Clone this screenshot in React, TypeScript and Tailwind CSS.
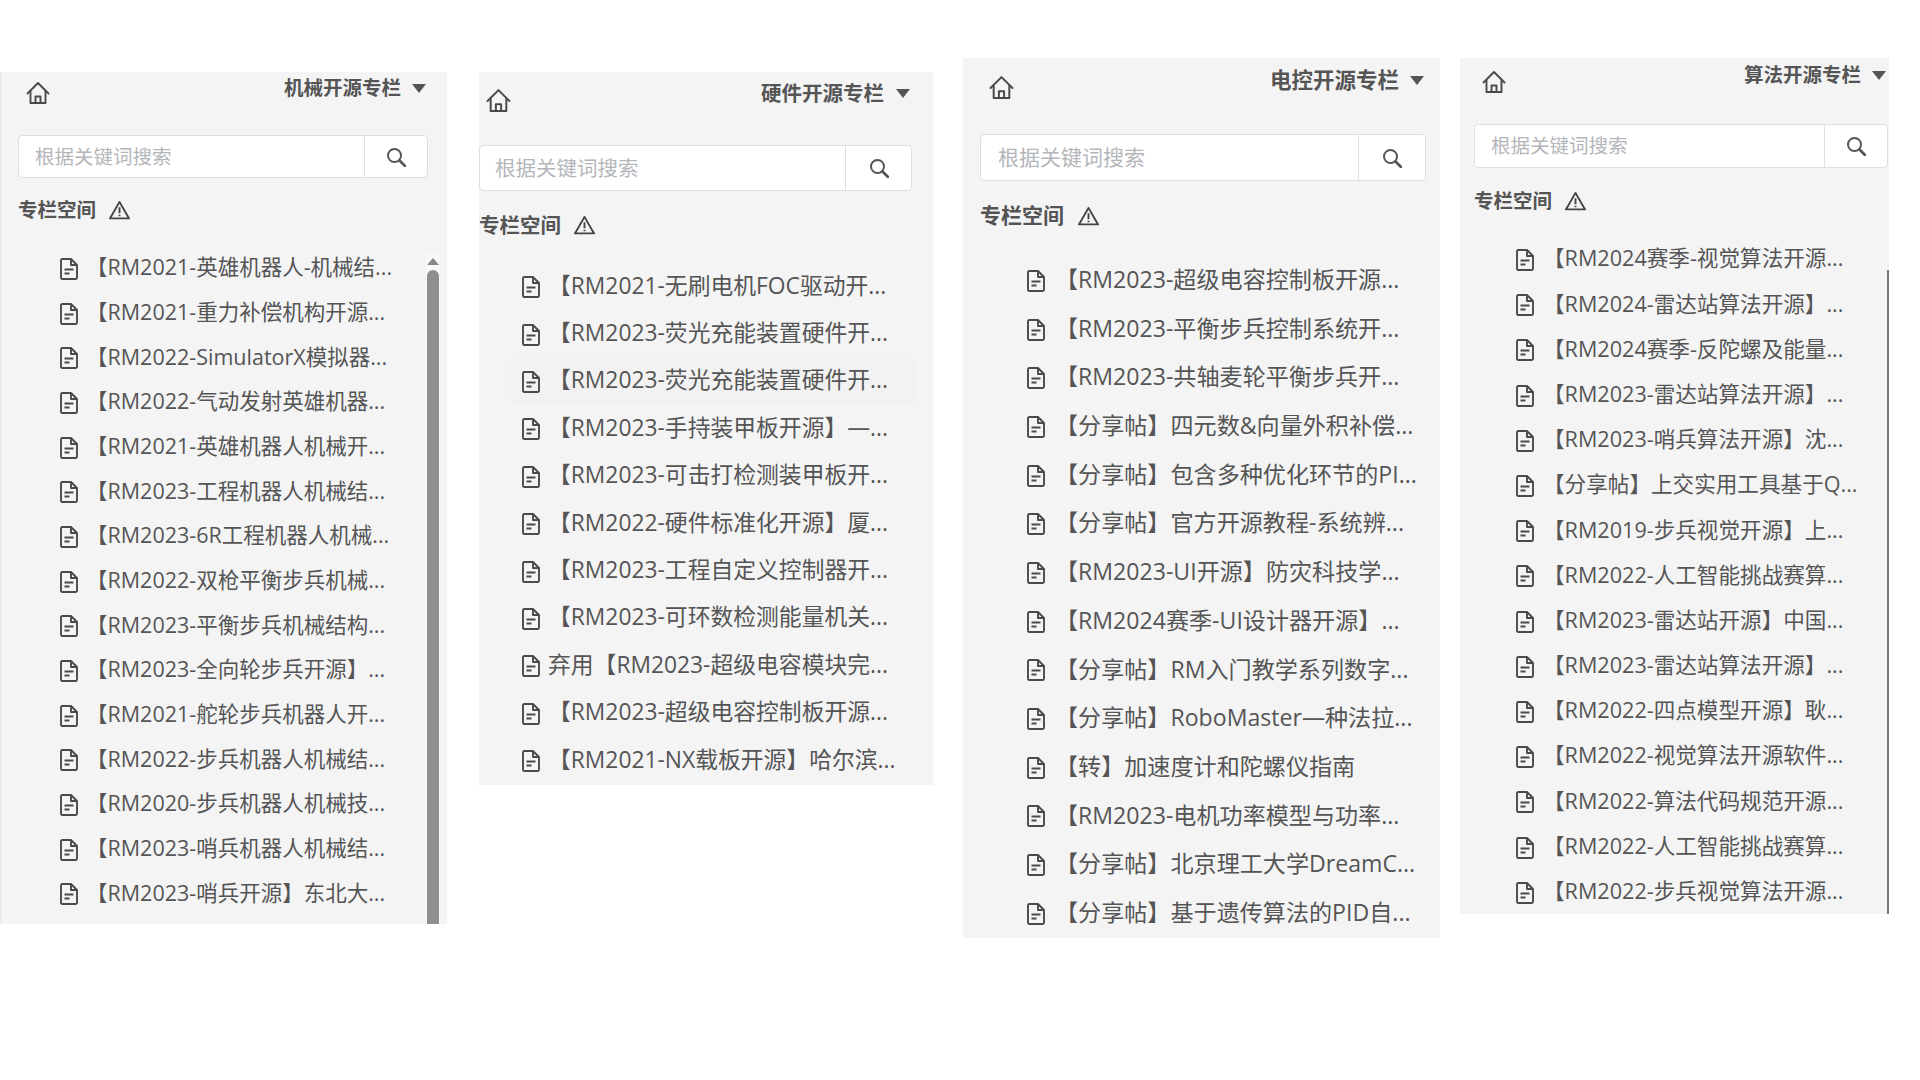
const columns = [
    {
        title: '机械开源专栏',
        panel: 'ml-0 mt-[72px] w-[447px] h-[852px] border-l border-gray-200',
        head: 'pl-[25px] pr-[21px] pt-[2px] h-[63px]',
        titleText: 'text-[19.5px] gap-[11px]',
        home: 'w-[24px] h-[24px] mt-[7px]',
        searchBox: 'ml-[17px] w-[410px] h-[43px]',
        input: 'w-[346px] pl-[16px] text-[19.5px]',
        label: 'ml-[17px] mt-[20px] h-[23px] text-[19.5px] gap-[13px]',
        list: 'mt-[24px] pl-[59px]',
        row: 'h-[44.7px] text-[21.5px] gap-[8px]',
        items: [
            '【RM2021-英雄机器人-机械结...',
            '【RM2021-重力补偿机构开源...',
            '【RM2022-SimulatorX模拟器...',
            '【RM2022-气动发射英雄机器...',
            '【RM2021-英雄机器人机械开...',
            '【RM2023-工程机器人机械结...',
            '【RM2023-6R工程机器人机械...',
            '【RM2022-双枪平衡步兵机械...',
            '【RM2023-平衡步兵机械结构...',
            '【RM2023-全向轮步兵开源】...',
            '【RM2021-舵轮步兵机器人开...',
            '【RM2022-步兵机器人机械结...',
            '【RM2020-步兵机器人机械技...',
            '【RM2023-哨兵机器人机械结...',
            '【RM2023-哨兵开源】东北大...',
        ],
    },
    {
        title: '硬件开源专栏',
        panel: 'ml-[32px] mt-[72px] w-[454px] h-[713px]',
        head: 'pl-[7px] pr-[23px] pt-[7px] h-[73px]',
        titleText: 'text-[20.5px] gap-[12px]',
        home: 'w-[25px] h-[25px] mt-[9px]',
        searchBox: 'ml-0 w-[433px] h-[46px]',
        input: 'w-[366px] pl-[15px] text-[20.5px]',
        label: 'ml-0 mt-[22px] h-[24px] text-[20.5px] gap-[13px]',
        list: 'mt-[25px] pl-[43px]',
        row: 'h-[47.4px] text-[22.8px] gap-[8px]',
        hover: 2,
        items: [
            '【RM2021-无刷电机FOC驱动开...',
            '【RM2023-荧光充能装置硬件开...',
            '【RM2023-荧光充能装置硬件开...',
            '【RM2023-手持装甲板开源】—...',
            '【RM2023-可击打检测装甲板开...',
            '【RM2022-硬件标准化开源】厦...',
            '【RM2023-工程自定义控制器开...',
            '【RM2023-可环数检测能量机关...',
            '弃用【RM2023-超级电容模块完...',
            '【RM2023-超级电容控制板开源...',
            '【RM2021-NX载板开源】哈尔滨...',
        ],
    },
    {
        title: '电控开源专栏',
        panel: 'ml-[30px] mt-[58px] w-[477px] h-[880px]',
        head: 'pl-[26px] pr-[16px] pt-[8px] h-[76px]',
        titleText: 'text-[21.5px] gap-[11px]',
        home: 'w-[25px] h-[25px] mt-[9px]',
        searchBox: 'ml-[17px] w-[446px] h-[47px]',
        input: 'w-[378px] pl-[17px] text-[21px]',
        label: 'ml-[17px] mt-[23px] h-[24px] text-[21px] gap-[14px]',
        list: 'mt-[27px] pl-[64px]',
        row: 'h-[48.7px] text-[23.1px] gap-[10px]',
        items: [
            '【RM2023-超级电容控制板开源...',
            '【RM2023-平衡步兵控制系统开...',
            '【RM2023-共轴麦轮平衡步兵开...',
            '【分享帖】四元数&向量外积补偿...',
            '【分享帖】包含多种优化环节的PI...',
            '【分享帖】官方开源教程-系统辨...',
            '【RM2023-UI开源】防灾科技学...',
            '【RM2024赛季-UI设计器开源】...',
            '【分享帖】RM入门教学系列数字...',
            '【分享帖】RoboMaster—种法拉...',
            '【转】加速度计和陀螺仪指南',
            '【RM2023-电机功率模型与功率...',
            '【分享帖】北京理工大学DreamC...',
            '【分享帖】基于遗传算法的PID自...',
        ],
    },
    {
        title: '算法开源专栏',
        panel: 'ml-[20px] mt-[58px] w-[429px] h-[856px]',
        head: 'pl-[22px] pr-[3px] pt-[3px] h-[66px]',
        titleText: 'text-[19.5px] gap-[11px]',
        home: 'w-[24px] h-[24px] mt-[9px]',
        searchBox: 'ml-[14px] w-[414px] h-[44px]',
        input: 'w-[350px] pl-[16px] text-[19.5px]',
        label: 'ml-[14px] mt-[21px] h-[23px] text-[19.5px] gap-[13px]',
        list: 'mt-[24px] pl-[56px]',
        row: 'h-[45.2px] text-[21.6px] gap-[9px]',
        thinBar: true,
        items: [
            '【RM2024赛季-视觉算法开源...',
            '【RM2024-雷达站算法开源】...',
            '【RM2024赛季-反陀螺及能量...',
            '【RM2023-雷达站算法开源】...',
            '【RM2023-哨兵算法开源】沈...',
            '【分享帖】上交实用工具基于Q...',
            '【RM2019-步兵视觉开源】上...',
            '【RM2022-人工智能挑战赛算...',
            '【RM2023-雷达站开源】中国...',
            '【RM2023-雷达站算法开源】...',
            '【RM2022-四点模型开源】耿...',
            '【RM2022-视觉算法开源软件...',
            '【RM2022-算法代码规范开源...',
            '【RM2022-人工智能挑战赛算...',
            '【RM2022-步兵视觉算法开源...',
        ],
    },
];

function HomeIcon({ className }: { className: string }) {
    return (
        <svg viewBox="0 0 24 24" fill="none" stroke="#4a4a4a" strokeWidth="1.9" strokeLinejoin="round" strokeLinecap="round" className={className}>
            <path d="M1.5 12.5 12 2l10.5 10.5" />
            <path d="M4.5 10.5V22h15V10.5" />
            <path d="M9.5 22v-6.5h5V22" />
        </svg>
    );
}

function DocIcon() {
    return (
        <svg viewBox="0 0 18 22" fill="none" stroke="#4a4a4a" strokeWidth="1.9" strokeLinejoin="round" className="w-[18px] h-[22px] shrink-0 mt-[3px]">
            <path d="M1 2.2C1 1.5 1.5 1 2.2 1H11l6 6v12.8c0 .7-.5 1.2-1.2 1.2H2.2c-.7 0-1.2-.5-1.2-1.2z" />
            <path d="M11 1v6h6" />
            <path d="M4.5 11.5h9M4.5 15.5h5" />
        </svg>
    );
}

function WarningIcon() {
    return (
        <svg viewBox="0 0 22 20" fill="none" stroke="#444" strokeWidth="2" strokeLinejoin="round" className="w-[21px] h-[20px] shrink-0">
            <path d="M11 1.5 21 18.8H1z" />
            <path d="M11 7v6.5M11 15v1.5" />
        </svg>
    );
}

function SearchIcon() {
    return (
        <svg viewBox="0 0 20 20" fill="none" stroke="#555" className="w-[20px] h-[20px]">
            <circle cx="8.5" cy="8.5" r="6.5" strokeWidth="2" />
            <path d="M13.5 13.5 19 19" strokeWidth="2.8" strokeLinecap="round" />
        </svg>
    );
}

export default function App() {
    return (
        <div className="w-[1920px] h-[1080px] bg-white flex items-start overflow-hidden font-['Open_Sans','Noto_Sans_CJK_SC',sans-serif]">
            {columns.map((col) => (
                <div key={col.title} className={`${col.panel} shrink-0 bg-[#f4f4f5] relative overflow-hidden`}>
                    <div className={`${col.head} flex justify-between items-start`}>
                        <HomeIcon className={col.home} />
                        <div className={`${col.titleText} flex items-center font-bold text-[#555] leading-[28px]`}>
                            {col.title}
                            <svg viewBox="0 0 14 9" className="w-[14px] h-[9px]">
                                <path d="M0 0h14L7 9z" fill="#555" />
                            </svg>
                        </div>
                    </div>

                    <div className={`${col.searchBox} flex bg-white border border-[#dcdfe6] rounded-[4px]`}>
                        <div className={`${col.input} h-full flex items-center text-[#b4b6ba] border-r border-[#dcdfe6]`}>
                            根据关键词搜索
                        </div>
                        <div className="flex-1 flex items-center justify-center">
                            <SearchIcon />
                        </div>
                    </div>

                    <div className={`${col.label} flex items-center font-bold text-[#555]`}>
                        专栏空间
                        <WarningIcon />
                    </div>

                    <div className={`${col.list} flex flex-col`}>
                        {col.items.map((item, i) => (
                            <div
                                key={i}
                                className={`${col.row} flex items-center text-[#555] whitespace-nowrap ${col.hover === i ? 'bg-[#f2f2f3] -ml-[12px] pl-[12px] w-[405px]' : ''}`}
                            >
                                <DocIcon />
                                <span>{item}</span>
                            </div>
                        ))}
                    </div>

                    {col.title === '机械开源专栏' && (
                        <div className="absolute right-[7px] top-[181px] bottom-0 w-[14px] bg-[#f9f9f9] flex flex-col items-center">
                            <svg viewBox="0 0 12 7" className="w-[12px] h-[7px] mt-[5px] mb-[5px] shrink-0">
                                <path d="M6 0l6 7H0z" fill="#888" />
                            </svg>
                            <div className="w-[12px] flex-1 bg-[#8f8f8f] rounded-t-[6px]" />
                        </div>
                    )}
                    {col.thinBar && (
                        <div className="absolute right-0 top-[212px] bottom-0 w-[2px] bg-[#777]" />
                    )}
                </div>
            ))}
        </div>
    );
}
